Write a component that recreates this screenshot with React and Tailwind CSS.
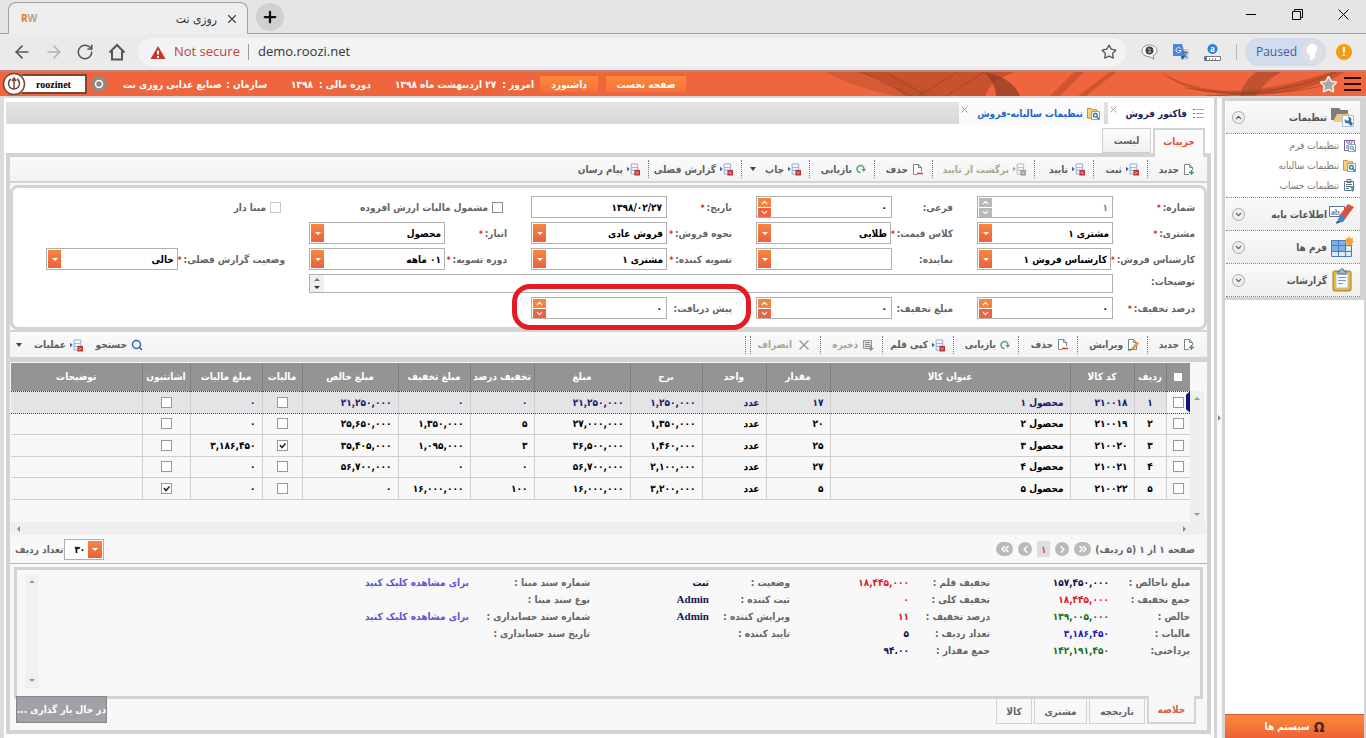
import React, { useState } from "react";
import {
  ArrowLeft,
  ArrowRight,
  ChevronDown,
  ChevronLeft,
  ChevronRight,
  ChevronsLeft,
  ChevronsRight,
  ChevronUp,
  Plus,
  RotateCw,
  Search,
  Star,
  X,
} from "lucide-react";

/* ------------ Small icons ------------ */
const ActionIcon = ({ muted }) => (
  <svg width="13" height="14" viewBox="0 0 14 14" fill="none" className="shrink-0">
    <path
      d="M4.5 1.5h7v4h-7zM4.5 8.5h7v4h-7zM4.5 5.5v3M11.5 5.5v3"
      stroke={muted ? "#b5b5b5" : "#8fa9d6"}
    />
    <path d="M0 4.5l3 2.5-3 2.5z" fill={muted ? "#a0a0a0" : "#41609e"} />
    <path d="M8 8h6v6H8z" fill={muted ? "#9a9a9a" : "#b8322f"} />
    <path d="M9.5 9.5l3 3M12.5 9.5l-3 3" stroke={muted ? "#ddd" : "#f0a9a0"} />
  </svg>
);

const PageIcon = ({ kind }) => (
  <svg width="12" height="13" viewBox="0 0 12 13" fill="none" className="shrink-0">
    <path d="M1.5 1.5h5l3 3v7h-8z" fill="#fff" stroke="#7d858c" />
    <path d="M6.5 1.5v3h3" stroke="#7d858c" />
    {kind === "new" && (
      <>
        <path d="M6 7h6v6H6z" fill="#f8f8f8" />
        <path d="M8.5 7v5M6 9.5h5" stroke="#3c9a63" strokeWidth="1.5" />
      </>
    )}
    {kind === "delete" && (
      <>
        <path d="M5 8h7v4H5z" fill="#f8f8f8" />
        <path d="M5 10.5h6" stroke="#d33c26" strokeWidth="1.5" />
      </>
    )}
    {kind === "edit" && (
      <>
        <path d="M10 4l1.5 1.5-5 6-2 .5.5-2z" fill="#f0a33a" stroke="#c57c1e" strokeWidth=".7" />
        <path d="M1 12l3.5-.5" stroke="#3d6fc0" strokeWidth="1.5" />
      </>
    )}
  </svg>
);

const RefreshIcon = () => (
  <svg width="10" height="10" viewBox="0 0 10 10" fill="none" className="shrink-0">
    <path d="M4.5 8.5A3.5 3.5 0 1 1 8 5" stroke="#56a07c" strokeWidth="1.5" />
    <path d="M5.5 5h4.5L7.7 8z" fill="#56a07c" />
  </svg>
);

const SaveIcon = () => (
  <svg width="12" height="12" viewBox="0 0 12 12" fill="none" className="shrink-0">
    <path d="M1.5 1.5h8v8h-8z" fill="#e3e3e3" stroke="#999" />
    <path d="M3 3.5h5M3 5.5h5M3 7.5h5" stroke="#8d8d8d" />
    <path d="M9 6v5M7 9l2 2 2-2" stroke="#8d8d8d" strokeWidth="1.5" />
  </svg>
);

const FolderWrench = () => (
  <svg width="13" height="13" viewBox="0 0 14 14" fill="none" className="shrink-0">
    <path d="M.5 12V1.5h4l1 1.5h5v9z" fill="#f3cf7f" stroke="#b8893c" />
    <path d="M5 5h8.5v8.5H5z" fill="#fff" stroke="#7b93ad" />
    <circle cx="9" cy="9" r="2" stroke="#3c6fa8" strokeWidth="1.4" />
    <path d="M10.5 10.5l2.5 2.5" stroke="#3c6fa8" strokeWidth="1.6" />
  </svg>
);

const FormGear = () => (
  <svg width="13" height="13" viewBox="0 0 13 13" fill="none" className="shrink-0">
    <path d="M1.5 11.5v-10h10v10z" fill="#fff" stroke="#7b5a9c" />
    <path d="M4 1v3h5V1M6.5 1v2M3 7h3M3 9h2" stroke="#7b5a9c" />
    <path d="M5.5 5.5h7v7h-7z" fill="#fff" stroke="#89a3b9" />
    <circle cx="8.7" cy="8.7" r="1.5" stroke="#3d7196" />
    <path d="M10 10l2 2" stroke="#3d7196" />
  </svg>
);

const AccountIcon = () => (
  <svg width="13" height="13" viewBox="0 0 13 13" fill="none" className="shrink-0">
    <path d="M1.5 2.5h9v9h-9z" fill="#fff" stroke="#617684" />
    <path d="M4 .5h4v3H4zM3 5.5h6M3 7.5h4M3 9.5h3" stroke="#617684" />
    <path d="M6 7h6L10 9.5V13L8.5 12V9.5z" fill="#5e8d9a" />
  </svg>
);

const ListIcon = () => (
  <svg width="11" height="9" viewBox="0 0 11 9" className="shrink-0">
    <path d="M0 .5h2M0 4.5h2M0 8.5h2" stroke="#4f7cc0" />
    <path d="M3 .5h8M3 4.5h8M3 8.5h8" stroke="#8fb0dc" />
  </svg>
);

/* ------------ Sidebar icons ------------ */
const SettingsIcon = () => (
  <svg width="24" height="22" viewBox="0 0 24 22" fill="none">
    <path d="M1 14V2h8l2 2h7v10z" fill="#7d7d7d" />
    <path d="M3 16L7 8h13l-3 8z" fill="#efc98a" />
    <path d="M12.5 9.5h11v11h-11z" fill="#f7fbff" stroke="#a8bfd3" />
    <path d="M15 13l2 2 2-1-1-3c3 0 4 2 3 4l2 3-2 2-3-3c-3 1-4-2-3-4z" fill="#2d72b0" />
  </svg>
);

const PencilIcon = () => (
  <svg width="26" height="22" viewBox="0 0 26 22" fill="none" className="[direction:ltr]">
    <path d="M.5 3.5h15v10H.5z" fill="#fff" stroke="#5e7186" />
    <text x="2" y="12" fontSize="9" fontFamily="Liberation Serif" fontWeight="normal" fill="#444">
      ab
    </text>
    <path d="M19 1l6 3-9 12-6-3z" fill="#d9533a" />
    <path d="M11 11l6 4-3 4-6 1z" fill="#4f82c4" />
    <path d="M8 18l3 1-4 2z" fill="#24406e" />
  </svg>
);

const TableIcon = () => (
  <svg width="24" height="22" viewBox="0 0 24 22" fill="none">
    <path d="M1.5 4.5h20v16h-20z" fill="#dcebfa" stroke="#4c7cb8" />
    <path d="M2 5h13v11H2z" fill="#7cb0e6" />
    <path d="M1.5 9.5h20M1.5 15.5h20M8.5 4.5v16M15.5 4.5v16" stroke="#4c7cb8" />
    <path
      d="M19 0l1.5 2.5L23 2l-.5 2.5L24 6l-2 1 .5 3-3-1.5L17 10l-.5-2.5L14 6l2-1.5L15.5 2l2.5.5z"
      fill="#eda63a"
    />
  </svg>
);

const ClipboardIcon = () => (
  <svg width="20" height="24" viewBox="0 0 20 24" fill="none">
    <rect x="1" y="3" width="18" height="20" rx="1.5" fill="#e9b53b" stroke="#a87a1c" />
    <path d="M4 6h12v14H4z" fill="#f4f9ff" stroke="#b3c3d4" />
    <path d="M6 9.5h8M6 12.5h8M6 15.5h5" stroke="#6f9ccf" />
    <path d="M6 6V3h2c0-3 4-3 4 0h2v3z" fill="#9fb6cc" stroke="#56728f" />
  </svg>
);

/* ------------ Browser frame ------------ */
const BrowserChrome = () => (
  <div className="flex flex-col font-['Open_Sans',sans-serif]">
    <div className="flex h-[34px] bg-[#e5e5e5] border-b border-[#a0a0a3]">
      <div className="relative top-px flex items-center ml-2 mt-px w-60 rounded-t-lg border border-b-0 border-[#a0a0a3] bg-[#eeeeee] px-3">
        <span className="font-bold text-[10px] text-[#d97a2b]">
          R<span className="text-[#b9a28c]">W</span>
        </span>
        <span dir="rtl" className="ml-auto font-['DejaVu_Sans_Condensed',sans-serif] text-xs text-[#333]">
          روزی نت
        </span>
        <button aria-label="Close tab" className="-mr-1 ml-2">
          <X size={14} color="#444" strokeWidth={2} />
        </button>
      </div>
      <button
        aria-label="New tab"
        className="ml-2 mt-[3px] flex size-7 items-center justify-center rounded-full bg-[#d0d0d0]"
      >
        <Plus size={18} color="#111" strokeWidth={3} />
      </button>
      <div className="ml-auto flex h-7 items-center text-black">
        <button aria-label="Minimize" className="w-[46px] flex justify-center">
          <span className="h-px w-[10px] bg-black"></span>
        </button>
        <button aria-label="Restore" className="w-[46px] flex justify-center">
          <svg width="11" height="11" fill="none" stroke="#000">
            <path d="M.5 2.5h8v8h-8zM2.5 2.5v-2h8v8h-2" />
          </svg>
        </button>
        <button aria-label="Close" className="w-[46px] flex justify-center">
          <svg width="11" height="11" fill="none" stroke="#000">
            <path d="M.5.5l10 10M10.5.5l-10 10" />
          </svg>
        </button>
      </div>
    </div>
    <div className="flex h-9 items-center bg-[#eaeaea] pl-3">
      <button aria-label="Back" className="mr-3">
        <ArrowLeft size={20} color="#555" strokeWidth={2} />
      </button>
      <button aria-label="Forward" className="mr-3">
        <ArrowRight size={20} color="#b3b3b3" strokeWidth={2} />
      </button>
      <button aria-label="Reload" className="mr-3">
        <RotateCw size={18} color="#555" strokeWidth={2} />
      </button>
      <button aria-label="Home" className="ml-[2px] mr-3">
        <svg width="18" height="18" viewBox="0 0 18 18" fill="none">
          <path d="M1.5 9.5L9 2l7.5 7.5M4 8v8.5h10V8" stroke="#555" strokeWidth="2" />
        </svg>
      </button>
      <div className="flex h-7 flex-1 items-center rounded-full bg-[#f1f3f4] pl-3 pr-[9px]">
        <svg width="16" height="15" viewBox="0 0 16 15">
          <path d="M8 1l7.5 13H.5z" fill="#c5362c" />
          <path d="M7 5.5h2v4H7zM7 11h2v2H7z" fill="#fff" />
        </svg>
        <span className="ml-2 text-[13px] text-[#c5403a]">Not secure</span>
        <span className="ml-2 mr-[9px] h-4 w-px bg-[#999]"></span>
        <input
          aria-label="Address"
          defaultValue="demo.roozi.net"
          className="min-w-0 flex-1 bg-transparent text-[13px] text-[#333] outline-none"
        />
        <Star size={16} color="#555" strokeWidth={2} />
      </div>
      <div className="flex items-center gap-[15px] pl-[15px]">
        <svg width="17" height="16" viewBox="0 0 17 16">
          <path d="M8.5 1C4 1 1 3.5 1 7s3 5.5 7 5.5l5 2.5-1-3.5C14.5 10.5 16 9 16 7c0-3.5-3-6-7.5-6z" fill="#fff" stroke="#888" />
          <circle cx="8.5" cy="6.5" r="4" fill="#444" />
          <path d="M7 5h2v4M7 8h3" stroke="#bbb" fill="none" />
        </svg>
        <svg width="16" height="16" viewBox="0 0 16 16">
          <path d="M6 5h9.5v10.5H8z" fill="#c9ccd1" />
          <path d="M0 0h9l3.5 12H0z" fill="#4a86e4" />
          <path d="M7.5 4.5A2.5 2.5 0 1 0 8 6.5H5.5" stroke="#fff" fill="none" />
          <path d="M9 8.5h6M12 7v2M14 9l-4 5M10.5 10l4 4" stroke="#4d6fa3" fill="none" />
          <path d="M8 12h4.5L9 16z" fill="#2f57a5" />
        </svg>
        <svg width="17" height="17" viewBox="0 0 17 17" className="overflow-visible">
          <circle cx="8.5" cy="5" r="5" fill="#2d84d8" />
          <text x="6" y="8" fontSize="8" fontWeight="bold" fill="#fff">
            a
          </text>
          <path d="M.5 12.5h16v4H.5z" fill="#fff" stroke="#777" />
          <path d="M1 13h2v3H1z" fill="#2d84d8" />
          <path d="M5.5 14v2M8.5 14v2M11.5 14v2" stroke="#999" />
        </svg>
        <span className="h-4 w-px bg-[#b8b8b8]"></span>
      </div>
      <button className="ml-2 flex h-7 items-center rounded-full bg-[#d2dcec] pl-[11px] pr-[3px] text-xs text-[#3b5da5]">
        Paused
        <span className="ml-1 flex size-[22px] items-center justify-center rounded-full bg-[#dcdfe3]">
          <svg width="12" height="16" viewBox="0 0 12 16" fill="#fff">
            <path d="M6 0c4 0 6 3 5 6l-2 4v3l-3 3H4v-5C1 10 0 8 1 5s2-5 5-5z" />
          </svg>
        </span>
      </button>
      <span className="ml-[10px] mr-[14px] flex size-4 items-center justify-center rounded-full bg-[#f29d13] text-xs font-bold text-white">
        !
      </span>
    </div>
  </div>
);

/* ------------ Orange header ------------ */
const AppHeader = () => (
  <header className="relative flex h-[26px] items-center overflow-hidden border-t-2 border-[#b98578] bg-[#ef653d] text-[10px] font-bold whitespace-nowrap text-white">
    <svg className="absolute right-0 top-0" width="540" height="24" viewBox="0 0 540 24" fill="none">
      <path d="M0 0h60l55 24H70C40 18 20 10 0 0z" fill="#d65a34" />
      <path d="M30 0h160c-20 6-28 14-30 24H78C66 12 50 4 30 0z" fill="#b94a28" opacity=".7" />
      <path d="M158 0c22 4 32 14 36 24h-24c0-8-4-16-12-24z" fill="#8b3a24" opacity=".7" />
      <path d="M36 0l50 24M60 0l40 24M120 24L158 0M92 24L132 0" stroke="#8b3a24" opacity=".5" />
      <path d="M248 0h10l-24 24h-10zM290 0l-30 24h-8l32-24z" fill="#b94a28" opacity=".6" />
      <path d="M335 0c40 24 90 26 170 0h14c-50 30-150 32-184 0z" fill="#b94a28" opacity=".7" />
      <path d="M430 0h26c-12 6-20 14-26 24h-16c2-10 8-18 16-24z" fill="#a2442a" opacity=".6" />
      <path d="M380 24c60-2 100-10 130-24M360 16c60 10 120 4 140-4" stroke="#8b3a24" opacity=".6" />
    </svg>
    <div className="relative flex w-full items-center">
      <div className="flex items-center pl-[2px]">
        <svg width="24" height="24" viewBox="0 0 24 24" fill="none" className="relative">
          <circle cx="12" cy="12" r="10.5" fill="#fff" stroke="#7c4637" strokeWidth="1.5" />
          <path d="M9 7a5.5 5.5 0 1 0 6 0" stroke="#63463f" strokeWidth="1.5" />
          <path d="M12 17V7M10 9l2-3 2 3" stroke="#8d3b2c" strokeWidth="1.5" />
        </svg>
        <span className="-ml-1 flex h-5 w-[65px] items-center justify-center border-2 border-l-0 border-[#7c4637] bg-white font-['Liberation_Serif',serif] text-[10px] text-black">
          roozinet
        </span>
        <svg width="16" height="16" viewBox="0 0 16 16" fill="none" className="ml-1">
          <circle cx="8" cy="8" r="8" fill="#94877f" />
          <circle cx="8" cy="8" r="3.5" stroke="#fff" strokeWidth="1.5" />
        </svg>
      </div>
      <div dir="rtl" className="ml-4 flex w-36 justify-between">
        <span>سازمان :</span>
        <span>صنایع غذایی روزی نت</span>
      </div>
      <div dir="rtl" className="ml-6 flex w-20 justify-between">
        <span>دوره مالی :</span>
        <span>۱۳۹۸</span>
      </div>
      <div dir="rtl" className="ml-6 flex w-[139px] justify-between">
        <span>امروز :</span>
        <span>۲۷ اردیبهشت ماه ۱۳۹۸</span>
      </div>
      <button className="ml-[6px] h-4 w-[58px] bg-linear-to-b from-[#fb8a39] to-[#f3703b]">داشبورد</button>
      <button className="ml-2 h-4 w-20 bg-linear-to-b from-[#fb8a39] to-[#f3703b]">صفحه نخست</button>
      <Star size={19} color="#eee" fill="#aaa8a6" strokeWidth={2} className="ml-auto mr-[6px]" />
      <button aria-label="Menu" className="mr-[5px] flex flex-col gap-1">
        <span className="h-[2px] w-[17px] bg-[#2a0f08]"></span>
        <span className="h-[2px] w-[17px] bg-[#2a0f08]"></span>
        <span className="h-[2px] w-[17px] bg-[#2a0f08]"></span>
      </button>
    </div>
  </header>
);

/* ------------ Sidebar ------------ */
const SIDE_GROUPS = [
  { label: "اطلاعات پایه", icon: <PencilIcon /> },
  { label: "فرم ها", icon: <TableIcon /> },
  { label: "گزارشات", icon: <ClipboardIcon /> },
];

const SideHeader = ({ label, icon, open }) => (
  <button className="flex h-[33px] w-full items-center border-b border-dotted border-[#888] bg-linear-to-b from-[#fafafa] to-[#efefef] pl-[6px] pr-1 text-[#555]">
    <span className="flex w-7 justify-center">{icon}</span>
    <span className="pr-px">{label}</span>
    <span className="mr-auto flex size-[13px] items-center justify-center rounded-full border border-[#aaa] bg-[#eee]">
      {open ? <ChevronUp size={9} strokeWidth={3} /> : <ChevronDown size={9} strokeWidth={3} />}
    </span>
  </button>
);

const Sidebar = () => (
  <aside className="flex w-[141px] flex-col border-r-2 border-[#d3d3d3] bg-white">
    <nav className="border-[3px] border-r-4 border-[#d3d3d3] border-l-0 pl-px">
      <SideHeader label="تنظیمات" icon={<SettingsIcon />} open />
      <ul className="border-b border-dotted border-[#888] bg-white pb-[2px] pt-px text-[#777] font-normal">
        {[
          ["تنظیمات فرم", <FormGear />],
          ["تنظیمات سالیانه", <FolderWrench />],
          ["تنظیمات حساب", <AccountIcon />],
        ].map(([label, icon]) => (
          <li key={label} className="h-5">
            <a href="#" className="flex h-5 items-center gap-1 pr-1">
              {icon}
              {label}
            </a>
          </li>
        ))}
      </ul>
      {SIDE_GROUPS.map((group) => (
        <SideHeader key={group.label} {...group} />
      ))}
    </nav>
    <button className="mt-auto flex h-6 items-center justify-center gap-1 border-t border-[#c9573a] bg-linear-to-b from-[#fb8a36] to-[#ec6139] text-white">
      <span className="text-sm text-[#4a2417]">Ω</span>
      سیستم ها
    </button>
  </aside>
);

/* ------------ Toolbars ------------ */
const MAIN_TOOLS = [
  { label: "جدید", icon: <PageIcon kind="new" />, width: "w-14" },
  { label: "ثبت", icon: <ActionIcon />, width: "w-[54px]" },
  { label: "تایید", icon: <ActionIcon />, width: "w-[59px]" },
  { label: "برگشت از تایید", icon: <ActionIcon muted />, width: "w-[102px]", disabled: true },
  { label: "حذف", icon: <PageIcon kind="delete" />, width: "w-[58px]" },
  { label: "بازیابی", icon: <RefreshIcon />, width: "w-[65px]" },
  { label: "چاپ", icon: <ActionIcon />, width: "w-[68px]", menu: true },
  { label: "گزارش فصلی", icon: <ActionIcon />, width: "w-[93px]" },
  { label: "پیام رسان", icon: <ActionIcon />, width: "w-20", last: true },
];

const ROW_TOOLS = [
  { label: "جدید", icon: <PageIcon kind="new" />, width: "w-14" },
  { label: "ویرایش", icon: <PageIcon kind="edit" />, width: "w-[70px]" },
  { label: "حذف", icon: <PageIcon kind="delete" />, width: "w-[59px]" },
  { label: "بازیابی", icon: <RefreshIcon />, width: "w-[65px]" },
  { label: "کپی قلم", icon: <ActionIcon />, width: "w-[71px]" },
  { label: "ذخیره", icon: <SaveIcon />, width: "w-[62px]", disabled: true },
  { label: "انصراف", icon: <X size={16} color="#999" className="shrink-0" />, width: "w-[70px]", disabled: true },
];

const Caret = () => (
  <span className="mr-auto border-x-[3px] border-t-4 border-x-transparent border-t-[#444]"></span>
);

const ToolButton = ({ label, icon, width, disabled, menu, last }) => (
  <button
    disabled={disabled}
    className={`flex h-[18px] items-center gap-1 whitespace-nowrap px-2 ${width} ${
      last ? "" : "border-l border-dotted border-[#777]"
    } ${disabled ? "text-[#a3ab8e]" : "text-[#606060]"}`}
  >
    {icon}
    {label}
    {menu && <Caret />}
  </button>
);

/* ------------ Form fields ------------ */
const Arrow = () => (
  <span className="border-x-[3px] border-t-[3px] border-x-transparent border-t-white"></span>
);

const Spinner = ({ muted }) => (
  <span className="flex w-[13px] flex-col gap-px">
    {[ChevronUp, ChevronDown].map((Icon, i) => (
      <button
        key={i}
        type="button"
        aria-label={i ? "کاهش" : "افزایش"}
        disabled={muted}
        className={`flex flex-1 items-center justify-center text-white ${
          muted ? "bg-[#b9b9b9]" : i ? "bg-[#ec6540]" : "bg-[#f4843f]"
        }`}
      >
        <Icon size={9} strokeWidth={3} />
      </button>
    ))}
  </span>
);

const Control = ({ id, type, value, muted }) => (
  <div className="flex h-[22px] w-34 border border-[#b0b0b0] bg-white p-px">
    {type === "select" ? (
      <div className="relative flex flex-1">
        <select
          id={id}
          className="w-full appearance-none bg-white pr-[2px] text-black outline-none"
        >
          <option>{value}</option>
        </select>
        <span className="pointer-events-none absolute inset-y-0 left-0 flex w-[13px] items-center justify-center bg-linear-to-b from-[#f6873c] to-[#ec603d]">
          <Arrow />
        </span>
      </div>
    ) : (
      <>
        <input
          id={id}
          defaultValue={value}
          disabled={muted}
          className={`min-w-0 flex-1 bg-white pr-[3px] outline-none ${muted ? "text-[#888]" : "text-black"}`}
        />
        {type === "number" && <Spinner muted={muted} />}
      </>
    )}
  </div>
);

const Field = ({ id, label, required, marked, ...rest }) => (
  <div className="relative flex justify-between">
    <label htmlFor={id} className="flex items-center gap-[2px] whitespace-nowrap">
      {label}:
      {required && <span className="pt-1 text-[8px] text-[#d22]">*</span>}
    </label>
    <Control id={id} {...rest} />
    {marked && (
      <span className="pointer-events-none absolute -bottom-[11px] -left-[19px] -right-[19px] -top-[13px] rounded-[18px] border-[5px] border-[#e31c23]"></span>
    )}
  </div>
);

const Check = ({ id, label, disabled }) => (
  <label htmlFor={id} className="flex items-center gap-1 whitespace-nowrap pr-1">
    <input
      id={id}
      type="checkbox"
      disabled={disabled}
      className="size-[11px] appearance-none border border-[#8d8d8d] bg-white disabled:border-[#c8c8c8]"
    />
    {label}
  </label>
);

const InvoiceForm = () => (
  <form className="grid grid-cols-[218px_197px_201px_198px_239px] gap-x-6 gap-y-1 rounded-lg border-[3px] border-[#d3d3d3] bg-white pb-2 pr-[9px] pt-2">
    <Field id="number" label="شماره" required type="number" value="۱" muted />
    <Field id="sub" label="فرعی" type="number" value="۰" />
    <Field id="date" label="تاریخ" required type="text" value="۱۳۹۸/۰۲/۲۷" />
    <Check id="vat" label="مشمول مالیات ارزش افزوده" />
    <Check id="based" label="مبنا دار" disabled />

    <Field id="customer" label="مشتری" required type="select" value="مشتری ۱" />
    <Field id="price-class" label="کلاس قیمت" required type="select" value="طلایی" />
    <Field id="sale-type" label="نحوه فروش" required type="select" value="فروش عادی" />
    <Field id="store" label="انبار" required type="select" value="محصول" />
    <span></span>

    <Field id="expert" label="کارشناس فروش" required type="select" value="کارشناس فروش ۱" />
    <Field id="agent" label="نماینده" type="select" value="" />
    <Field id="payer" label="تسویه کننده" required type="select" value="مشتری ۱" />
    <Field id="period" label="دوره تسویه" required type="select" value="۰۱ ماهه" />
    <Field id="season" label="وضعیت گزارش فصلی" required type="select" value="خالی" />

    <div className="col-span-4 flex h-[19px]">
      <label htmlFor="notes" className="w-[82px]">
        توضیحات:
      </label>
      <div className="flex flex-1 border border-[#b0b0b0]">
        <textarea id="notes" rows={1} className="flex-1 resize-none overflow-hidden outline-none" />
        <span className="flex w-[14px] flex-col items-center justify-between bg-[#f0f0f0] py-[3px]">
          <span className="border-x-[3px] border-b-[3px] border-x-transparent border-b-[#777]"></span>
          <span className="border-x-[3px] border-t-[3px] border-x-transparent border-t-[#333]"></span>
        </span>
      </div>
    </div>
    <span></span>

    <Field id="discount-percent" label="درصد تخفیف" required type="number" value="۰" />
    <Field id="discount" label="مبلغ تخفیف" type="number" value="۰" />
    <Field id="prepaid" label="پیش دریافت" type="number" value="۰" marked />
  </form>
);

/* ------------ Invoice rows ------------ */
const COLUMNS = [
  { label: "ردیف", width: "w-8" },
  { label: "کد کالا", width: "w-16" },
  { label: "عنوان کالا", width: "w-60" },
  { label: "مقدار", width: "w-16" },
  { label: "واحد", width: "w-16" },
  { label: "نرخ", width: "w-[72px]" },
  { label: "مبلغ", width: "w-24" },
  { label: "تخفیف درصد", width: "w-16" },
  { label: "مبلغ تخفیف", width: "w-[72px]" },
  { label: "مبلغ خالص", width: "w-24" },
  { label: "مالیات", width: "w-10" },
  { label: "مبلغ مالیات", width: "w-[72px]" },
  { label: "اشانتیون", width: "w-12" },
  { label: "توضیحات", width: "" },
];

const ROWS = [
  ["۱", "۲۱۰۰۱۸", "محصول ۱", "۱۷", "عدد", "۱,۲۵۰,۰۰۰", "۲۱,۲۵۰,۰۰۰", "۰", "۰", "۲۱,۲۵۰,۰۰۰", false, "۰", false, ""],
  ["۲", "۲۱۰۰۱۹", "محصول ۲", "۲۰", "عدد", "۱,۳۵۰,۰۰۰", "۲۷,۰۰۰,۰۰۰", "۵", "۱,۳۵۰,۰۰۰", "۲۵,۶۵۰,۰۰۰", false, "۰", false, ""],
  ["۳", "۲۱۰۰۲۰", "محصول ۳", "۲۵", "عدد", "۱,۴۶۰,۰۰۰", "۳۶,۵۰۰,۰۰۰", "۳", "۱,۰۹۵,۰۰۰", "۳۵,۴۰۵,۰۰۰", true, "۳,۱۸۶,۴۵۰", false, ""],
  ["۴", "۲۱۰۰۲۱", "محصول ۴", "۲۷", "عدد", "۲,۱۰۰,۰۰۰", "۵۶,۷۰۰,۰۰۰", "۰", "۰", "۵۶,۷۰۰,۰۰۰", false, "۰", false, ""],
  ["۵", "۲۱۰۰۲۲", "محصول ۵", "۵", "عدد", "۳,۲۰۰,۰۰۰", "۱۶,۰۰۰,۰۰۰", "۱۰۰", "۱۶,۰۰۰,۰۰۰", "۰", false, "۰", true, ""],
];

const GridCheck = ({ checked, label }) => (
  <span className="relative mx-auto flex size-[11px]">
    <input
      type="checkbox"
      aria-label={label}
      defaultChecked={checked}
      className="peer size-[11px] appearance-none border border-[#999] bg-white"
    />
    <svg
      viewBox="0 0 11 11"
      className="pointer-events-none absolute inset-0 hidden size-[11px] peer-checked:block"
      fill="none"
    >
      <path d="M3 5l2 2.5L8.5 3.5" stroke="#222" strokeWidth="1.5" />
    </svg>
  </span>
);

const InvoiceTable = () => {
  const [selected, setSelected] = useState(0);

  return (
    <div className="flex flex-1 pl-px pr-[3px]" dir="ltr">
      <div className="flex-1" dir="rtl">
        <table className="w-full table-fixed border-collapse">
          <thead>
            <tr className="h-7 bg-[#949494] text-white">
              <th className="w-6 p-0">
                <span className="mx-auto block size-2 bg-white"></span>
              </th>
              {COLUMNS.map((col) => (
                <th
                  key={col.label}
                  className={`${col.width} whitespace-nowrap border-r border-[#7d7d7d] p-0 font-bold`}
                >
                  {col.label}
                </th>
              ))}
            </tr>
          </thead>
          <tbody>
            {ROWS.map((row, i) => (
              <tr
                key={row[0]}
                onClick={() => setSelected(i)}
                className={`${i % 2 ? "h-[21px]" : "h-[22px]"} ${
                  selected === i
                    ? "border-y border-dotted border-[#3a3a80] bg-[#e4e4e7] text-[#16206e]"
                    : "border-b border-[#cfcfcf] text-black"
                }`}
              >
                <td className="relative bg-[#f8f8f8] p-0">
                  <GridCheck label={`انتخاب ردیف ${row[0]}`} />
                  {selected === i && (
                    <span className="absolute inset-y-0 right-0 w-1 bg-[#0b1480] [clip-path:polygon(0_15%,100%_0,100%_100%,0_85%)]"></span>
                  )}
                </td>
                {row.map((cell, j) => (
                  <td
                    key={j}
                    className={`whitespace-nowrap border-r border-[#cfcfcf] p-0 ${
                      j === 0 ? "text-center" : typeof cell === "boolean" ? "" : "pr-[6px]"
                    }`}
                  >
                    {typeof cell === "boolean" ? (
                      <GridCheck checked={cell} label={COLUMNS[j].label} />
                    ) : (
                      cell
                    )}
                  </td>
                ))}
              </tr>
            ))}
          </tbody>
        </table>
      </div>
      <div className="mt-7 flex w-[14px] flex-col items-center justify-between bg-[#efefef] py-[6px]">
        <span className="border-x-[3px] border-b-[3px] border-x-transparent border-b-[#999]"></span>
        <span className="border-x-[3px] border-t-[3px] border-x-transparent border-t-[#999]"></span>
      </div>
    </div>
  );
};

const Pager = () => (
  <div className="flex h-[29px] items-center border-b border-[#b5b5b5] pl-[5px] pr-3">
    <span className="ml-1">صفحه ۱ از ۱ (۵ ردیف)</span>
    <div className="flex items-center gap-[5px] text-white">
      <button aria-label="اولین" className="flex h-[14px] w-[17px] items-center justify-center rounded-full bg-[#bababa]">
        <ChevronsRight size={12} strokeWidth={3} />
      </button>
      <button aria-label="قبلی" className="flex size-[14px] items-center justify-center rounded-full bg-[#bababa]">
        <ChevronRight size={11} strokeWidth={3} />
      </button>
      <button className="flex h-4 w-[13px] items-center justify-center bg-[#dedede] text-[#e05a45]">۱</button>
      <button aria-label="بعدی" className="flex size-[14px] items-center justify-center rounded-full bg-[#bababa]">
        <ChevronLeft size={11} strokeWidth={3} />
      </button>
      <button aria-label="آخرین" className="flex h-[14px] w-[17px] items-center justify-center rounded-full bg-[#bababa]">
        <ChevronsLeft size={12} strokeWidth={3} />
      </button>
    </div>
    <div className="relative mr-auto flex h-[21px] w-10 border border-[#b0b0b0] bg-white p-px">
      <select id="page-size" className="w-full appearance-none pr-[17px] text-black outline-none">
        <option>۳۰</option>
      </select>
      <span className="pointer-events-none absolute inset-y-px right-px flex w-[14px] items-center justify-center bg-linear-to-b from-[#f6873c] to-[#ec603d]">
        <Arrow />
      </span>
    </div>
    <label htmlFor="page-size" className="whitespace-nowrap pr-px">
      تعداد ردیف
    </label>
  </div>
);

/* ------------ Summary ------------ */
const LINK = "text-[#5b57d6]";
const SUMMARY = [
  [
    ["مبلغ ناخالص :", "۱۵۷,۴۵۰,۰۰۰", "text-[#141450]"],
    ["جمع تخفیف :", "۱۸,۴۴۵,۰۰۰", "text-[#e0202c]"],
    ["خالص :", "۱۳۹,۰۰۵,۰۰۰", "text-[#1d6e1d]"],
    ["مالیات :", "۳,۱۸۶,۴۵۰", "text-[#2020c0]"],
    ["پرداختی:", "۱۴۲,۱۹۱,۴۵۰", "text-[#1d6e1d]"],
  ],
  [
    ["تخفیف قلم :", "۱۸,۴۴۵,۰۰۰", "text-[#e0202c]"],
    ["تخفیف کلی :", "۰", "text-[#e0202c]"],
    ["درصد تخفیف :", "۱۱", "text-[#e0202c]"],
    ["تعداد ردیف :", "۵", "text-[#141450]"],
    ["جمع مقدار :", "۹۴.۰۰", "text-[#141450]"],
  ],
  [
    ["وضعیت :", "ثبت", "text-[#141450]"],
    ["ثبت کننده :", "Admin", "text-[#141450] font-['Liberation_Serif',serif] text-[11px]"],
    ["ویرایش کننده :", "Admin", "text-[#141450] font-['Liberation_Serif',serif] text-[11px]"],
    ["تایید کننده :", "", ""],
  ],
  [
    ["شماره سند مبنا :", "برای مشاهده کلیک کنید", LINK],
    ["نوع سند مبنا :", "", ""],
    ["شماره سند حسابداری :", "برای مشاهده کلیک کنید", LINK],
    ["تاریخ سند حسابداری :", "", ""],
  ],
];

const Summary = () => (
  <div className="mx-1 mt-[3px] flex h-[132px] justify-between border-[3px] border-[#d3d3d3] pb-2 pl-2 pr-[10px] pt-1">
    <div className="flex">
      {SUMMARY.map((group, i) => (
        <dl
          key={i}
          className={`flex flex-col whitespace-nowrap leading-[17px] ${i === 3 ? "w-[260px]" : "w-50"}`}
        >
          {group.map(([label, value, color]) => (
            <div key={label} className="flex h-[17px]">
              <dt className={i === 3 ? "w-[121px]" : "w-[81px]"}>{label}</dt>
              <dd className={color}>{color === LINK ? <a href="#">{value}</a> : value}</dd>
            </div>
          ))}
        </dl>
      ))}
    </div>
    <div className="flex w-[14px] flex-col items-center justify-between bg-[#f1f1f1] py-[6px]">
      <span className="border-x-[3px] border-b-[3px] border-x-transparent border-b-[#999]"></span>
      <span className="border-x-[3px] border-t-[3px] border-x-transparent border-t-[#999]"></span>
    </div>
  </div>
);

const BottomTabs = () => (
  <div className="relative flex h-[31px] pr-[11px]">
    <button className="relative -top-[3px] h-7 w-[49px] border-b-2 border-x-2 border-[#d3d3d3] bg-[#f8f8f8] text-[#e05a45]">
      خلاصه
    </button>
    <button className="mr-[2px] h-[25px] w-14 border border-t-0 border-[#d3d3d3]">تاریخچه</button>
    <button className="mr-[2px] h-[25px] w-[53px] border border-t-0 border-[#d3d3d3]">مشتری</button>
    <button className="mr-[2px] h-[25px] w-9 border border-t-0 border-[#d3d3d3]">کالا</button>
    <div className="absolute -top-[3px] left-[6px] flex h-[27px] w-[91px] items-center justify-center whitespace-nowrap border border-[#86868c] bg-[#97979d]/90 text-white">
      در حال بار گذاری ...
    </div>
  </div>
);

/* ------------ Workspace ------------ */
const Workspace = () => (
  <main className="flex min-w-0 flex-1 flex-col border-l-4 border-[#dcdcdc] bg-white pb-1 pl-[2px] pr-[3px] pt-1">
    <div className="flex h-[22px] bg-linear-to-b from-[#e4e4e4] to-[#d8d8d8]">
      <div className="flex w-[103px] items-center bg-white pr-[7px] text-[#1f1f5e]">
        <ListIcon />
        <a href="#" className="mr-[6px] whitespace-nowrap">
          فاکتور فروش
        </a>
        <button aria-label="بستن" className="mb-2 mr-auto">
          <X size={11} color="#999" />
        </button>
      </div>
      <div className="mr-1 flex w-[145px] items-center bg-[#fafafa] pr-1 text-[#2465cf]">
        <FolderWrench />
        <a href="#" className="mr-1 whitespace-nowrap">
          تنظیمات سالیانه-فروش
        </a>
        <button aria-label="بستن" className="mb-2 mr-auto">
          <X size={11} color="#999" />
        </button>
      </div>
    </div>
    <div className="relative flex h-[29px] items-end gap-[2px] pr-[6px]">
      <button className="relative top-1 h-[29px] w-[52px] border-2 border-b-0 border-[#d3d3d3] bg-[#fafafa] pb-1 text-[#e8503a]">
        جزییات
      </button>
      <button className="h-[25px] w-[49px] border border-[#cfcfcf] bg-linear-to-b from-[#fdfdfd] to-[#f1f1f1]">لیست</button>
    </div>

    <section className="flex flex-1 flex-col border-4 border-[#d3d3d3] bg-[#f8f8f8]">
      <div className="flex h-[26px] items-center border-b-2 border-[#d3d3d3] bg-linear-to-b from-[#fafafa] to-[#f3f3f3] pr-1">
        {MAIN_TOOLS.map((tool) => (
          <ToolButton key={tool.label} {...tool} />
        ))}
      </div>
      <div className="pt-[2px]">
        <InvoiceForm />
      </div>
      <div className="flex h-8 items-center border-b-[5px] border-t-2 border-[#d3d3d3] bg-linear-to-b from-[#fafafa] to-[#f3f3f3] pr-1">
        {ROW_TOOLS.map((tool) => (
          <ToolButton key={tool.label} {...tool} />
        ))}
        <span className="mr-1 h-[18px] border-l border-dotted border-[#777]"></span>
        <button className="mr-auto flex w-[60px] items-center gap-1 text-[#606060]">
          <Search size={12} color="#2b62b8" strokeWidth={3} />
          جستجو
        </button>
        <button className="ml-[6px] flex w-[67px] items-center gap-1 text-[#606060]">
          <ActionIcon />
          عملیات
          <Caret />
        </button>
      </div>
      <div className="flex flex-1 flex-col pt-px">
        <InvoiceTable />
        <div className="mx-px flex h-[13px] items-center justify-between bg-[#efefef] pl-[6px] pr-5">
          <span className="border-y-[3px] border-l-[3px] border-y-transparent border-l-[#888]"></span>
          <span className="border-y-[3px] border-r-[3px] border-y-transparent border-r-[#888]"></span>
        </div>
      </div>
      <Pager />
      <Summary />
      <BottomTabs />
    </section>
  </main>
);

const App = () => {
  return (
    <div className="flex min-h-screen flex-col bg-white font-['DejaVu_Sans_Condensed','DejaVu_Sans',sans-serif]">
      <BrowserChrome />
      <AppHeader />
      <div
        dir="rtl"
        className="flex flex-1 border-t-2 border-[#d9d9d9] text-[10px] font-bold text-[#666]"
      >
        <Sidebar />
        <div className="flex w-[11px] items-center justify-center border-x-[3px] border-[#d3d3d3] bg-[#fbfbfb]">
          <span className="border-y-[3px] border-l-[3px] border-y-transparent border-l-[#888]"></span>
        </div>
        <Workspace />
      </div>
    </div>
  );
};

export default App;
